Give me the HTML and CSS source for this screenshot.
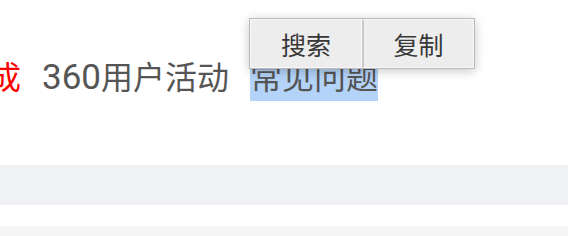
FILE: index.html
```html
<!DOCTYPE html>
<html>

<head>
    <title>360</title>
    <meta charset="utf-8">
    <meta name="viewport" content="width=device-width, initial-scale=1.0">
    <link rel="stylesheet" href="styles.css">
</head>

<body>

    <div class="top">
        <nav class="links">
            <a class="rod">成</a>
            <a><span class="tal">360</span>用户活动</a>
            <a class="markeret">常见问题</a>
        </nav>

        <div class="menu">
            <button>搜索</button>
            <button>复制</button>
        </div>
    </div>

    <div class="band"></div>
    <div class="luft"></div>
    <div class="band2"></div>

</body>

</html>
```

FILE: styles.css
```css
body {
    margin: 0;
    background: #ffffff;
    font-family: "Noto Sans CJK SC", "Noto Sans", sans-serif;
}

.top {
    position: relative;
    height: 165px;
}

.links {
    display: flex;
    align-items: baseline;
    gap: 21px;
    padding-top: 52px;
    margin-left: -11px;
    font-size: 32px;
    line-height: 46px;
    color: #555555;
}

.links a {
    white-space: nowrap;
}

.tal {
    font-family: Roboto, sans-serif;
    font-size: 35px;
}

.rod {
    color: #ff0000;
}

.markeret {
    background: #b3d3f8;
    padding-bottom: 3px;
}

.menu {
    position: absolute;
    top: 18px;
    left: 249px;
    display: flex;
    border: 1px solid #bababa;
    background: #ececec;
    box-shadow: 0 2px 10px rgba(0, 0, 0, 0.22);
}

.menu button {
    width: 112px;
    height: 49px;
    border: 1px solid #f8f8f8;
    background: #ededed;
    color: #383838;
    font-family: "Noto Sans CJK SC", "Noto Sans", sans-serif;
    font-size: 25px;
    padding: 0;
}

.menu button + button {
    width: 112px;
    border-left: 2px solid #cacaca;
}

.band {
    height: 40px;
    background: #f0f1f5;
}

.luft {
    height: 21px;
}

.band2 {
    height: 10px;
    background: #f5f5f5;
}
```
